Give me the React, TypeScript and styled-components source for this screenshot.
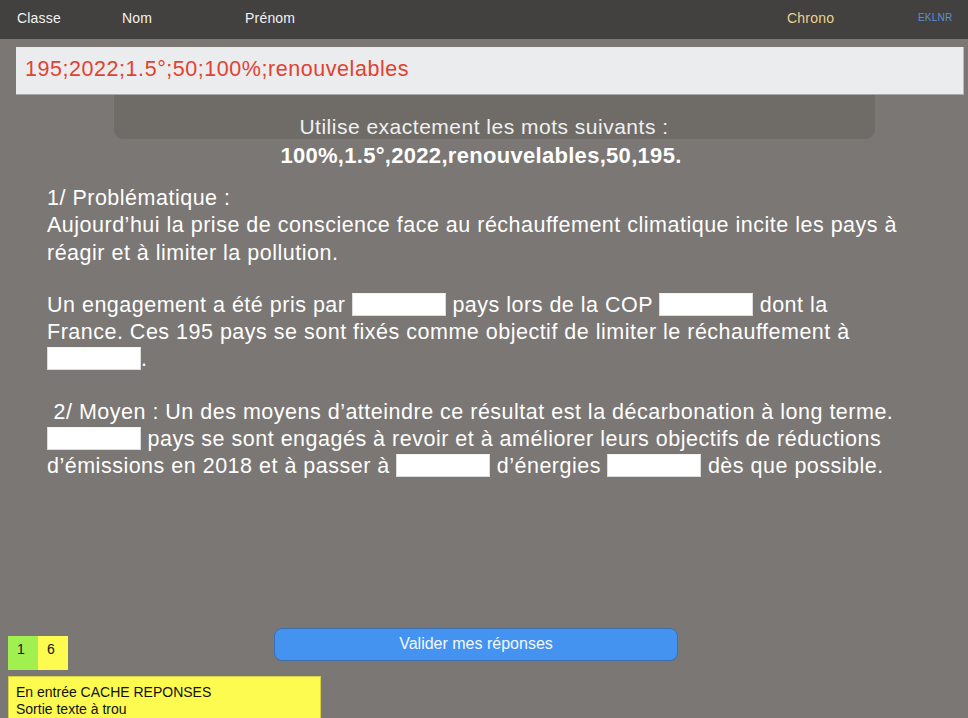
import { FC } from "react";
import styled, { createGlobalStyle } from "styled-components";

const GlobalStyle = createGlobalStyle`
  html, body {
    margin: 0;
    padding: 0;
    background: #7b7774;
  }
  body {
    font-family: "Liberation Sans", Arial, Helvetica, sans-serif;
  }
`;

const Page = styled.div`
  display: flex;
  flex-direction: column;
  height: 718px;
  width: 968px;
  overflow: hidden;
  background: #7b7774;
  color: #ffffff;
`;

const TopBar = styled.header`
  display: flex;
  align-items: center;
  height: 39px;
  flex-shrink: 0;
  padding-left: 17px;
  padding-bottom: 4px;
  box-sizing: border-box;
  background: #424140;
  font-size: 14px;
  color: #f2f2f2;
`;

const TopItem = styled.span<{ $width?: number; $color?: string; $size?: number }>`
  width: ${(p) => (p.$width ? `${p.$width}px` : "auto")};
  color: ${(p) => p.$color ?? "#f2f2f2"};
  font-size: ${(p) => p.$size ?? 14}px;
  letter-spacing: 0.2px;
  flex-shrink: 0;
`;

const AnswerBox = styled.div`
  margin: 8px 4px 0 16px;
  height: 48px;
  box-sizing: border-box;
  padding: 0 0 2px 9px;
  display: flex;
  align-items: center;
  background: #ebecee;
  border-right: 1px solid #b9b9bb;
  border-bottom: 1px solid #a9a9ab;
  color: #e2412f;
  font-size: 21.5px;
  letter-spacing: 0.55px;
`;

const HintPanel = styled.div`
  margin: 0 93px 0 114px;
  height: 44px;
  box-sizing: border-box;
  padding: 21px 21px 0 0;
  background: #6f6c68;
  border-radius: 0 0 9px 9px;
  text-align: center;
  font-size: 21px;
  line-height: 22px;
  font-weight: 300;
  color: #f0f0f0;
  letter-spacing: 0.5px;
`;

const Words = styled.div`
  margin-top: 6px;
  padding-right: 6px;
  text-align: center;
  font-size: 22px;
  line-height: 22px;
  font-weight: bold;
  letter-spacing: 0.3px;
`;

const Body = styled.div`
  margin: 18px 0 0 47px;
  width: 860px;
  font-size: 21.5px;
  line-height: 27.3px;
  letter-spacing: 0.5px;
  color: #ffffff;
`;

const Paragraph = styled.p`
  margin: 0 0 25px 0;
`;

const Blank = styled.span`
  display: inline-block;
  width: 92px;
  height: 21px;
  vertical-align: -4px;
  background: #ffffff;
  border: 1px solid #dcdcdc;
  border-top-color: #f4f4f4;
`;

const Spacer = styled.div`
  flex: 1;
`;

const FooterRow = styled.div`
  display: flex;
  align-items: flex-start;
  padding-left: 8px;
`;

const Counters = styled.div`
  display: flex;
  margin-top: 8px;
`;

const Counter = styled.div<{ $bg: string }>`
  width: 30px;
  height: 34px;
  box-sizing: border-box;
  padding: 4px 0 0 9px;
  background: ${(p) => p.$bg};
  color: #111;
  font-size: 14px;
  line-height: 18px;
`;

const ValidateButton = styled.button`
  margin-left: 206px;
  width: 404px;
  height: 33px;
  background: #4593f0;
  border: 1px solid #3a6fb0;
  border-radius: 8px;
  color: #f4f8ff;
  font-family: "Liberation Sans", Arial, sans-serif;
  font-size: 16px;
  font-weight: 300;
  padding: 0 0 2px 0;
  cursor: pointer;
`;

const Note = styled.div`
  margin: 6px 0 0 8px;
  width: 313px;
  height: 42px;
  box-sizing: border-box;
  padding: 7px 0 0 7px;
  background: #fdfb4f;
  border: 1px solid #d4d244;
  border-bottom: none;
  color: #111;
  font-size: 14px;
  line-height: 17px;
`;

const App: FC = () => {
  return (
    <Page>
      <GlobalStyle />
      <TopBar>
        <TopItem $width={105}>Classe</TopItem>
        <TopItem $width={123}>Nom</TopItem>
        <TopItem $width={542}>Prénom</TopItem>
        <TopItem $width={131} $color="#e9d38c">
          Chrono
        </TopItem>
        <TopItem $color="#5d8fd2" $size={10}>
          EKLNR
        </TopItem>
      </TopBar>

      <AnswerBox>195;2022;1.5°;50;100%;renouvelables</AnswerBox>
      <HintPanel>Utilise exactement les mots suivants :</HintPanel>
      <Words>100%,1.5°,2022,renouvelables,50,195.</Words>

      <Body>
        <Paragraph>
          1/ Problématique :<br />
          Aujourd’hui la prise de conscience face au réchauffement climatique
          incite les pays à réagir et à limiter la pollution.
        </Paragraph>
        <Paragraph>
          Un engagement a été pris par <Blank /> pays lors de la COP <Blank />{" "}
          dont la France. Ces 195 pays se sont fixés comme objectif de limiter
          le réchauffement à <Blank />.
        </Paragraph>
        <Paragraph>
          &nbsp;2/ Moyen : Un des moyens d’atteindre ce résultat est la
          décarbonation à long terme. <Blank /> pays se sont engagés à revoir
          et à améliorer leurs objectifs de réductions d’émissions en 2018 et à
          passer à <Blank /> d’énergies <Blank /> dès que possible.
        </Paragraph>
      </Body>

      <Spacer />

      <FooterRow>
        <Counters>
          <Counter $bg="#a2f04f">1</Counter>
          <Counter $bg="#fdfb4f">6</Counter>
        </Counters>
        <ValidateButton>Valider mes réponses</ValidateButton>
      </FooterRow>
      <Note>
        En entrée CACHE REPONSES
        <br />
        Sortie texte à trou
      </Note>
    </Page>
  );
};

export default App;
